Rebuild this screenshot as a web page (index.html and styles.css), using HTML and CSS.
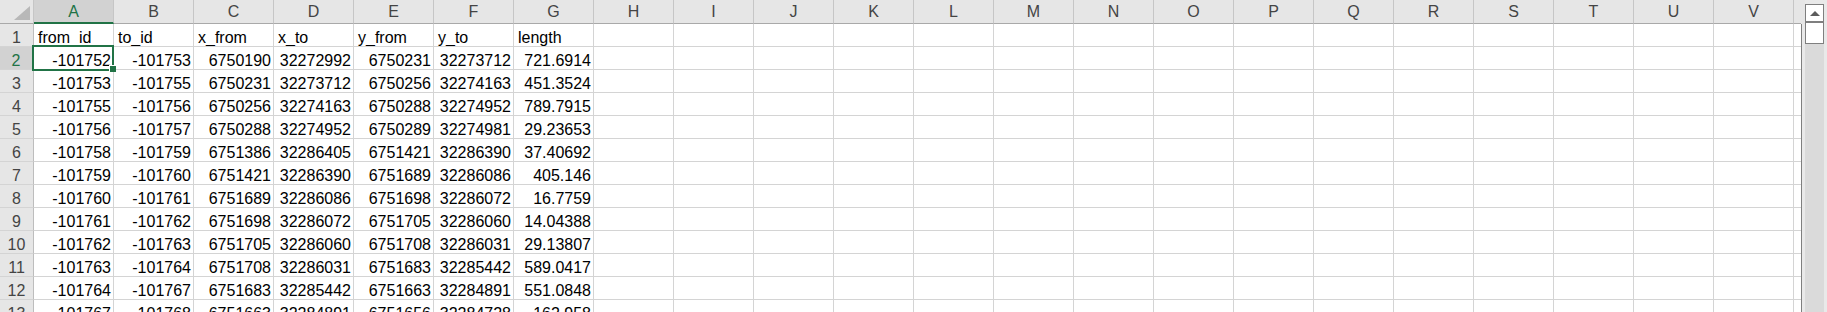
FILE: index.html
```html
<!DOCTYPE html>
<html>
<head>
  <meta charset="utf-8">
  <link rel="stylesheet" href="styles.css">
</head>
<body>
  <div class="window">
    <div class="sheet" id="sheet">
      <div class="cell corner">
        <svg width="16" height="14" viewBox="0 0 16 14"><polygon points="16,0 16,14 0,14" fill="#b8b8b8"/></svg>
      </div>
    </div>
    <div class="edge">
      <div class="edge-top"></div>
      <div class="edge-body"></div>
    </div>
    <div class="vscroll">
      <div class="track">
        <div class="btn-up"><span class="arrow"></span></div>
        <div class="thumb"></div>
      </div>
    </div>
  </div>

  <script>
    var letters = "ABCDEFGHIJKLMNOPQRSTUV".split("");
    var header = ["from_id", "to_id", "x_from", "x_to", "y_from", "y_to", "length"];
    var rows = [
      ["-101752", "-101753", "6750190", "32272992", "6750231", "32273712", "721.6914"],
      ["-101753", "-101755", "6750231", "32273712", "6750256", "32274163", "451.3524"],
      ["-101755", "-101756", "6750256", "32274163", "6750288", "32274952", "789.7915"],
      ["-101756", "-101757", "6750288", "32274952", "6750289", "32274981", "29.23653"],
      ["-101758", "-101759", "6751386", "32286405", "6751421", "32286390", "37.40692"],
      ["-101759", "-101760", "6751421", "32286390", "6751689", "32286086", "405.146"],
      ["-101760", "-101761", "6751689", "32286086", "6751698", "32286072", "16.7759"],
      ["-101761", "-101762", "6751698", "32286072", "6751705", "32286060", "14.04388"],
      ["-101762", "-101763", "6751705", "32286060", "6751708", "32286031", "29.13807"],
      ["-101763", "-101764", "6751708", "32286031", "6751683", "32285442", "589.0417"],
      ["-101764", "-101767", "6751683", "32285442", "6751663", "32284891", "551.0848"],
      ["-101767", "-101768", "6751663", "32284891", "6751656", "32284728", "162.958"]
    ];
    var sheet = document.getElementById("sheet");

    function cell(cls, text) {
      var d = document.createElement("div");
      d.className = "cell " + cls;
      if (text) d.textContent = text;
      sheet.appendChild(d);
      return d;
    }

    letters.forEach(function(l, i) {
      cell(i == 0 ? "ch sel-head" : "ch", l);
    });
    cell("ch tail");

    var all = [header].concat(rows);
    all.forEach(function(r, ri) {
      cell(ri == 1 ? "rh sel-head" : "rh", String(ri + 1));
      letters.forEach(function(l, ci) {
        var v = r[ci] || "";
        var cls = ri == 0 ? "txt" : "num";
        var c = cell(cls, v);
        if (ri == 1 && ci == 0) c.classList.add("active");
      });
      cell("tail");
    });
  </script>
</body>
</html>
```

FILE: styles.css
```css
* {
  box-sizing: border-box;
}
body {
  margin: 0;
  padding: 0;
  background: #fff;
  font-family: "Liberation Sans", Arial, sans-serif;
  font-size: 16px;
  color: #000;
  overflow: hidden;
}
.window {
  display: flex;
  width: 1827px;
  height: 312px;
  overflow: hidden;
}
.sheet {
  display: grid;
  grid-template-columns: 34px repeat(22, 80px) 7px;
  grid-template-rows: 24px;
  grid-auto-rows: 23px;
  width: 1801px;
}
.cell {
  border-right: 1px solid #d4d4d4;
  border-bottom: 1px solid #d4d4d4;
  padding: 4px 3px 0 4px;
  line-height: 19px;
  white-space: nowrap;
  overflow: hidden;
}
.txt {
  text-align: left;
}
.num {
  text-align: right;
  padding-right: 2px;
}
.tail {
  border-right: none;
  padding: 0;
}
.corner {
  background: #e6e6e6;
  border-right: 1px solid #c6c6c6;
  border-bottom: 1px solid #a9a9a9;
  display: flex;
  align-items: flex-end;
  justify-content: flex-end;
  padding: 0 3px 3px 0;
}
.corner svg {
  display: block;
}
.ch {
  background: #e6e6e6;
  color: #444;
  text-align: center;
  border-right: 1px solid #c6c6c6;
  border-bottom: 1px solid #a9a9a9;
  padding: 1px 0 0;
  line-height: 22px;
}
.ch.tail {
  border-right: none;
}
.rh {
  background: #e6e6e6;
  color: #444;
  text-align: center;
  border-right: 1px solid #bdbdbd;
  border-bottom: 1px solid #d4d4d4;
  padding: 4px 0 0;
}
.ch.sel-head {
  background: #d2d2d2;
  color: #217346;
  border-bottom: 2px solid #217346;
}
.rh.sel-head {
  background: #d2d2d2;
  color: #217346;
  border-right: 2px solid #217346;
}
.active {
  position: relative;
  overflow: visible;
}
.active::before {
  content: "";
  position: absolute;
  left: -2px;
  top: -2px;
  right: -1px;
  bottom: -2px;
  border: 2px solid #217346;
}
.active::after {
  content: "";
  position: absolute;
  right: -3px;
  bottom: -3px;
  width: 6px;
  height: 6px;
  background: #217346;
  border: 1px solid #fff;
  border-right: none;
  border-bottom: none;
}
.edge {
  display: flex;
  flex-direction: column;
  width: 4px;
}
.edge-top {
  height: 24px;
  background: #e6e6e6;
}
.edge-body {
  flex: 1;
  background: #e9e9e9;
  border-left: 1px solid #7f7f7f;
}
.vscroll {
  width: 22px;
  background: #e9e9e9;
  padding-top: 4px;
  border-top: 0;
}
.track {
  width: 19px;
  height: 100%;
  background: #dadada;
}
.btn-up {
  height: 18px;
  background: #fff;
  border: 1px solid #7f7f7f;
  display: flex;
  align-items: center;
  justify-content: center;
}
.arrow {
  width: 0;
  height: 0;
  border-left: 5px solid transparent;
  border-right: 5px solid transparent;
  border-bottom: 5px solid #5c5c5c;
}
.thumb {
  height: 22px;
  background: #fff;
  border: 1px solid #7f7f7f;
  border-top: 1px solid #7f7f7f;
}
```
